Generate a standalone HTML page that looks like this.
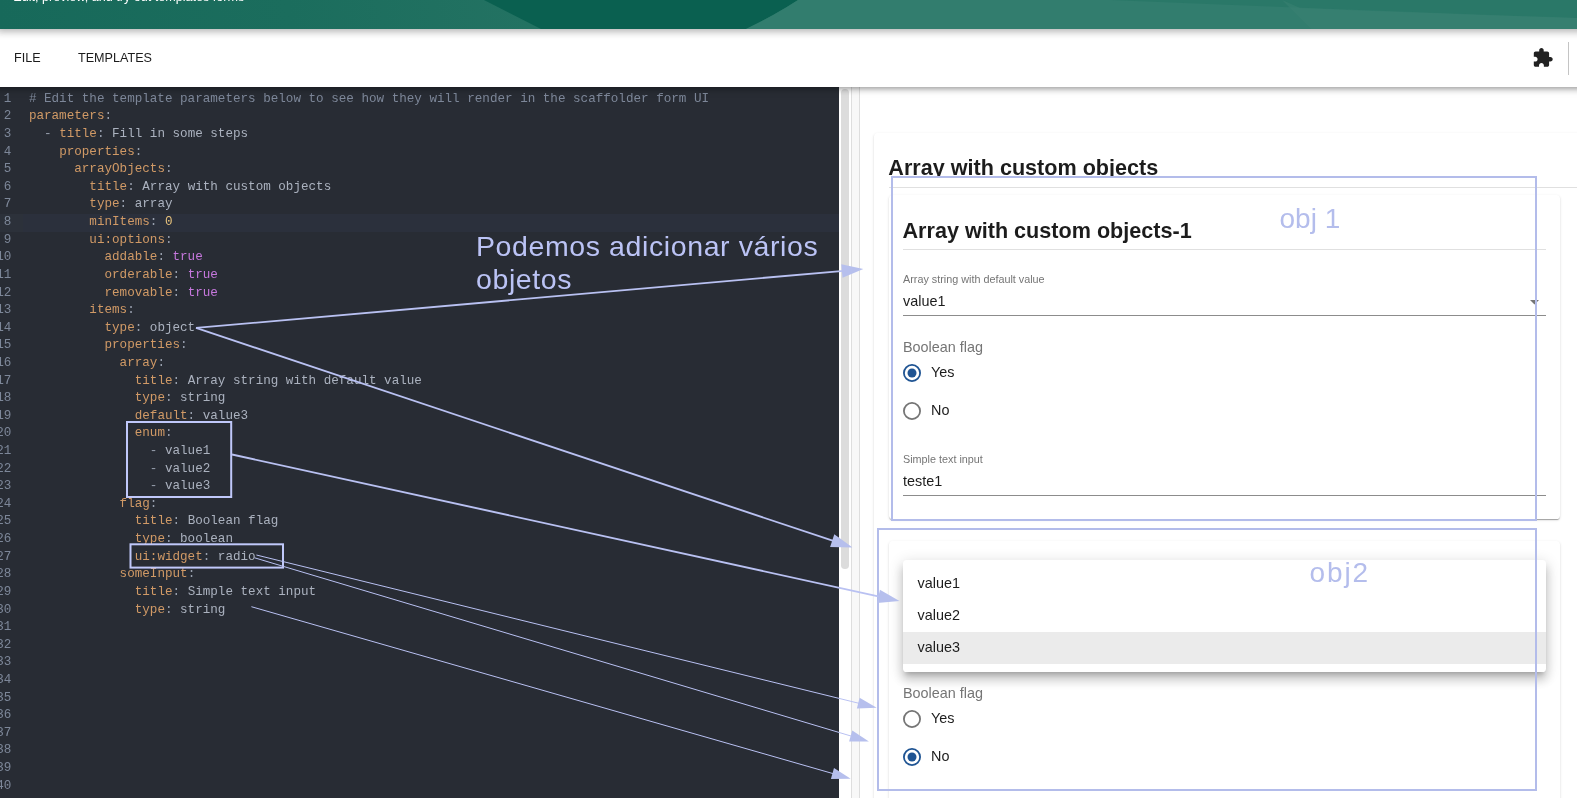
<!DOCTYPE html>
<html lang="pt-BR">
<head>
<meta charset="utf-8">
<title>Template Editor</title>
<style>
*{box-sizing:border-box;margin:0;padding:0}
html,body{width:1577px;height:798px;overflow:hidden;background:#fff;font-family:"Liberation Sans",Arial,sans-serif;color:rgba(0,0,0,.87)}
.abs{position:absolute}
#header{position:absolute;left:0;top:0;width:1617px;height:28.5px;background:#1b6d5e;box-shadow:0 0 7px 3px rgba(20,20,20,.3);z-index:5;overflow:hidden}
#header svg{position:absolute;left:0;top:0}
#hfg{position:absolute;left:0;top:0;width:1577px;height:28.5px;overflow:hidden;z-index:6;will-change:transform}
#hfg .sub{position:absolute;left:13.3px;top:-10.1px;font-size:12.6px;line-height:15px;color:#fff;white-space:nowrap}
#toolbar{position:absolute;left:-20px;top:28px;width:1637px;height:59px;background:#fff;z-index:4;box-shadow:0 2px 4px -1px rgba(0,0,0,.2),0 4px 5px 0 rgba(0,0,0,.14),0 1px 10px 0 rgba(0,0,0,.12)}
#tfg{position:absolute;left:0;top:28px;width:400px;height:59px;z-index:6;will-change:transform}
#tfg .btn{position:absolute;top:23px;font-size:12.6px;line-height:15px;color:#1c1c1c;text-transform:uppercase;white-space:nowrap}
#toolbar .vdiv{position:absolute;left:1588px;top:14px;width:1px;height:33px;background:#c4c4c4}
#toolbar svg{position:absolute;left:1551.6px;top:19px;width:21.6px;height:21.6px;fill:#212121}
#editorbg{position:absolute;left:0;top:87px;width:839px;height:711px;background:#282c34}
#editor{position:absolute;left:0;top:87px;width:839px;height:711px;overflow:hidden;will-change:transform;font-family:"Liberation Mono",monospace;font-size:12.6px;line-height:17.613px;color:#abb2bf;padding-top:3.83px}
.ln{position:relative;height:17.613px;white-space:pre}
.ln.act{background:#2b303c}
.ln.act::before{content:"";position:absolute;left:0;top:0;width:22.8px;height:100%;background:#2c313a}
.g{position:absolute;left:-12px;top:0;width:23.4px;text-align:right;color:#7d8799}
.t{position:absolute;left:28.9px;top:0}
.c{color:#7d8799}.k{color:#d19a66}.p{color:#98a0ae}.s{color:#abb2bf}.b{color:#c678dd}.n{color:#e5c07b}
#sb{position:absolute;left:839px;top:87px;width:12px;height:711px;background:#fff}
#sb i{position:absolute;left:2.3px;top:2px;width:7.6px;height:479.5px;border-radius:3.8px;background:#dcdcdc}
#split{position:absolute;left:851px;top:87px;width:9px;height:711px;background:#f8f8f8;border-left:1px solid #dedede;border-right:1px solid #dedede}
#preview{position:absolute;left:860px;top:87px;width:717px;height:711px;background:#fff;overflow:hidden}
#previewfg{position:absolute;left:860px;top:87px;width:717px;height:711px;overflow:hidden;will-change:transform}
.card{position:absolute;background:#fff;border-radius:3.6px;box-shadow:0 2px 1px -1px rgba(0,0,0,.2),0 1px 1px 0 rgba(0,0,0,.14),0 1px 3px 0 rgba(0,0,0,.12)}
.h5{position:absolute;font-size:21.6px;font-weight:700;line-height:26px;color:#1c1c1c;white-space:nowrap}
.hr{position:absolute;height:1px;background:#e0e0e0}
.lbl{position:absolute;font-size:10.8px;line-height:13px;color:#757575;white-space:nowrap}
.val{position:absolute;font-size:14.4px;line-height:17px;color:#1c1c1c;white-space:nowrap}
.leg{position:absolute;font-size:14.4px;line-height:17px;color:#757575;white-space:nowrap}
.ul{position:absolute;height:1px;background:#8c8c8c}
.radio{position:absolute;width:18px;height:18px;border-radius:50%;border:1.8px solid #757575}
.radio.on{border-color:#1f5493}
.radio.on::after{content:"";position:absolute;left:2.7px;top:2.7px;width:9px;height:9px;border-radius:50%;background:#1f5493}
#menu{position:absolute;left:43px;top:473.2px;width:643px;height:111.5px;background:#fff;border-radius:3.6px;box-shadow:0 5px 5px -3px rgba(0,0,0,.2),0 8px 10px 1px rgba(0,0,0,.14),0 3px 14px 2px rgba(0,0,0,.12)}
#menu .sel{position:absolute;left:0;top:71.6px;width:100%;height:32.2px;background:#ebebeb}
#anno{position:absolute;left:0;top:0;z-index:10;pointer-events:none}
#anno text{font-family:"Liberation Sans",Arial,sans-serif;fill:#b4bdec}
</style>
</head>
<body>
<div id="header">
<svg width="1577" height="29" viewBox="0 0 1577 29">
<defs><linearGradient id="hg" gradientUnits="userSpaceOnUse" x1="0" y1="29" x2="520" y2="-40"><stop offset="0" stop-color="#17695a"/><stop offset="0.55" stop-color="#1b6d5d"/><stop offset="1" stop-color="#237262"/></linearGradient></defs>
<rect width="1577" height="29" fill="url(#hg)"/>
<path d="M484 0 L541 29 L746 29 Q775 15 798 0 Z" fill="#0a6050"/>
<path d="M798 0 Q775 15 746 29 L1577 29 L1577 0 Z" fill="#327d6e"/>
<path d="M1110 0 Q1350 10 1577 18 L1577 0 Z" fill="#2a7868"/>
<path d="M1282 0 L1311 29 L1577 29 L1577 18 Q1420 13 1300 8 Z" fill="#388071" opacity=".6"/>
</svg>
</div>
<div id="hfg"><div class="sub">Edit, preview, and try out templates forms</div></div>
<div id="toolbar">
<svg viewBox="0 0 24 24"><path d="M20.5 11H19V7c0-1.1-.9-2-2-2h-4V3.5C13 2.12 11.88 1 10.5 1S8 2.12 8 3.5V5H4c-1.1 0-1.99.9-1.99 2v3.8H3.5c1.49 0 2.7 1.21 2.7 2.7s-1.21 2.7-2.7 2.7H2V20c0 1.1.9 2 2 2h3.8v-1.5c0-1.49 1.21-2.7 2.7-2.7 1.49 0 2.7 1.21 2.7 2.7V22H17c1.1 0 2-.9 2-2v-4h1.5c1.38 0 2.5-1.12 2.5-2.5S21.88 11 20.5 11z"/></svg>
<div class="vdiv"></div>
</div>
<div id="tfg"><div class="btn" style="left:14px">FILE</div><div class="btn" style="left:78px">TEMPLATES</div></div>
<div id="editorbg"></div>
<div id="editor">
<div class="ln"><span class="g">1</span><span class="t"><span class="c"># Edit the template parameters below to see how they will render in the scaffolder form UI</span></span></div>
<div class="ln"><span class="g">2</span><span class="t"><span class="k">parameters</span><span class="p">:</span></span></div>
<div class="ln"><span class="g">3</span><span class="t">  <span class="p">-</span> <span class="k">title</span><span class="p">:</span> <span class="s">Fill in some steps</span></span></div>
<div class="ln"><span class="g">4</span><span class="t">    <span class="k">properties</span><span class="p">:</span></span></div>
<div class="ln"><span class="g">5</span><span class="t">      <span class="k">arrayObjects</span><span class="p">:</span></span></div>
<div class="ln"><span class="g">6</span><span class="t">        <span class="k">title</span><span class="p">:</span> <span class="s">Array with custom objects</span></span></div>
<div class="ln"><span class="g">7</span><span class="t">        <span class="k">type</span><span class="p">:</span> <span class="s">array</span></span></div>
<div class="ln act"><span class="g">8</span><span class="t">        <span class="k">minItems</span><span class="p">:</span> <span class="n">0</span></span></div>
<div class="ln"><span class="g">9</span><span class="t">        <span class="k">ui:options</span><span class="p">:</span></span></div>
<div class="ln"><span class="g">10</span><span class="t">          <span class="k">addable</span><span class="p">:</span> <span class="b">true</span></span></div>
<div class="ln"><span class="g">11</span><span class="t">          <span class="k">orderable</span><span class="p">:</span> <span class="b">true</span></span></div>
<div class="ln"><span class="g">12</span><span class="t">          <span class="k">removable</span><span class="p">:</span> <span class="b">true</span></span></div>
<div class="ln"><span class="g">13</span><span class="t">        <span class="k">items</span><span class="p">:</span></span></div>
<div class="ln"><span class="g">14</span><span class="t">          <span class="k">type</span><span class="p">:</span> <span class="s">object</span></span></div>
<div class="ln"><span class="g">15</span><span class="t">          <span class="k">properties</span><span class="p">:</span></span></div>
<div class="ln"><span class="g">16</span><span class="t">            <span class="k">array</span><span class="p">:</span></span></div>
<div class="ln"><span class="g">17</span><span class="t">              <span class="k">title</span><span class="p">:</span> <span class="s">Array string with default value</span></span></div>
<div class="ln"><span class="g">18</span><span class="t">              <span class="k">type</span><span class="p">:</span> <span class="s">string</span></span></div>
<div class="ln"><span class="g">19</span><span class="t">              <span class="k">default</span><span class="p">:</span> <span class="s">value3</span></span></div>
<div class="ln"><span class="g">20</span><span class="t">              <span class="k">enum</span><span class="p">:</span></span></div>
<div class="ln"><span class="g">21</span><span class="t">                <span class="p">-</span> <span class="s">value1</span></span></div>
<div class="ln"><span class="g">22</span><span class="t">                <span class="p">-</span> <span class="s">value2</span></span></div>
<div class="ln"><span class="g">23</span><span class="t">                <span class="p">-</span> <span class="s">value3</span></span></div>
<div class="ln"><span class="g">24</span><span class="t">            <span class="k">flag</span><span class="p">:</span></span></div>
<div class="ln"><span class="g">25</span><span class="t">              <span class="k">title</span><span class="p">:</span> <span class="s">Boolean flag</span></span></div>
<div class="ln"><span class="g">26</span><span class="t">              <span class="k">type</span><span class="p">:</span> <span class="s">boolean</span></span></div>
<div class="ln"><span class="g">27</span><span class="t">              <span class="k">ui:widget</span><span class="p">:</span> <span class="s">radio</span></span></div>
<div class="ln"><span class="g">28</span><span class="t">            <span class="k">someInput</span><span class="p">:</span></span></div>
<div class="ln"><span class="g">29</span><span class="t">              <span class="k">title</span><span class="p">:</span> <span class="s">Simple text input</span></span></div>
<div class="ln"><span class="g">30</span><span class="t">              <span class="k">type</span><span class="p">:</span> <span class="s">string</span></span></div>
<div class="ln"><span class="g">31</span><span class="t"></span></div>
<div class="ln"><span class="g">32</span><span class="t"></span></div>
<div class="ln"><span class="g">33</span><span class="t"></span></div>
<div class="ln"><span class="g">34</span><span class="t"></span></div>
<div class="ln"><span class="g">35</span><span class="t"></span></div>
<div class="ln"><span class="g">36</span><span class="t"></span></div>
<div class="ln"><span class="g">37</span><span class="t"></span></div>
<div class="ln"><span class="g">38</span><span class="t"></span></div>
<div class="ln"><span class="g">39</span><span class="t"></span></div>
<div class="ln"><span class="g">40</span><span class="t"></span></div>
</div>
<div id="sb"><i></i></div>
<div id="split"></div>
<div id="preview">
  <div class="card" style="left:13.5px;top:45.5px;width:760px;height:800px"></div>
  <div class="hr" style="left:29px;top:100px;width:700px"></div>
  <div class="card" style="left:28.5px;top:107.7px;width:671.5px;height:324.8px"></div>
  <div class="hr" style="left:43px;top:162px;width:643px"></div>
  <svg class="abs" style="left:669.8px;top:213px" width="9" height="5" viewBox="0 0 9 5"><path d="M0 0h9L4.5 4.5z" fill="#757575"/></svg>
  <div class="ul" style="left:43px;top:228px;width:643px"></div>
  <svg class="abs" style="left:40.8px;top:274.7px" width="22" height="22" viewBox="0 0 22 22"><circle cx="11" cy="11" r="8.1" fill="none" stroke="#1f5493" stroke-width="1.8"/><circle cx="11" cy="11" r="4.5" fill="#1f5493"/></svg>
  <svg class="abs" style="left:40.8px;top:312.8px" width="22" height="22" viewBox="0 0 22 22"><circle cx="11" cy="11" r="8.1" fill="none" stroke="#757575" stroke-width="1.8"/></svg>
  <div class="ul" style="left:43px;top:408px;width:643px"></div>
  <div class="card" style="left:28.5px;top:454.4px;width:671.5px;height:400px"></div>
  <div id="menu"><div class="sel"></div></div>
  <svg class="abs" style="left:40.8px;top:620.7px" width="22" height="22" viewBox="0 0 22 22"><circle cx="11" cy="11" r="8.1" fill="none" stroke="#757575" stroke-width="1.8"/></svg>
  <svg class="abs" style="left:40.8px;top:658.7px" width="22" height="22" viewBox="0 0 22 22"><circle cx="11" cy="11" r="8.1" fill="none" stroke="#1f5493" stroke-width="1.8"/><circle cx="11" cy="11" r="4.5" fill="#1f5493"/></svg>
</div>
<div id="previewfg">
  <div class="h5" style="left:28.3px;top:68px;height:22.8px;overflow:hidden">Array with custom objects</div>
  <div class="h5" style="left:42.5px;top:131.2px">Array with custom objects-1</div>
  <div class="lbl" style="left:43px;top:185.5px">Array string with default value</div>
  <div class="val" style="left:43px;top:205.5px">value1</div>
  <div class="leg" style="left:43px;top:251.5px">Boolean flag</div>
  <div class="val" style="left:71px;top:277.2px">Yes</div>
  <div class="val" style="left:71px;top:315.3px">No</div>
  <div class="lbl" style="left:43px;top:366.2px">Simple text input</div>
  <div class="val" style="left:43px;top:386.3px">teste1</div>
  <div class="val" style="left:57.6px;top:488px">value1</div>
  <div class="val" style="left:57.6px;top:520.1px">value2</div>
  <div class="val" style="left:57.6px;top:552.3px">value3</div>
  <div class="leg" style="left:43px;top:597.6px">Boolean flag</div>
  <div class="val" style="left:71px;top:623.2px">Yes</div>
  <div class="val" style="left:71px;top:661.2px">No</div>
</div>

<svg id="anno" width="1577" height="798" viewBox="0 0 1577 798">
<g fill="none" stroke="#b3bcea" stroke-width="2">
<rect x="892" y="177" width="644" height="343"/>
<rect x="878" y="529" width="658" height="261"/>
</g>
<g fill="none" stroke="#c0c8fa" stroke-width="2">
<rect x="127" y="422" width="104.2" height="75"/>
<rect x="130.5" y="544.3" width="152.5" height="23.3"/>
</g>
<line x1="196.0" y1="327.9" x2="843.9" y2="270.8" stroke="#b9c1f2" stroke-width="1.8"/><polygon points="842.5,277.7 863.3,269.1 841.3,264.3" fill="#b6bfed"/>
<line x1="196.0" y1="327.9" x2="834.1" y2="541.2" stroke="#b9c1f2" stroke-width="1.8"/><polygon points="830.1,546.9 852.6,547.4 834.3,534.2" fill="#b6bfed"/>
<line x1="232.0" y1="454.5" x2="880.5" y2="596.8" stroke="#b9c1f2" stroke-width="1.8"/><polygon points="877.1,602.9 899.5,601.0 879.9,589.8" fill="#b6bfed"/>
<line x1="256.4" y1="555.0" x2="860.2" y2="703.6" stroke="#b9c1f2" stroke-width="1"/><polygon points="856.9,708.6 876.7,707.7 859.6,697.7" fill="#b6bfed"/>
<line x1="254.6" y1="557.8" x2="852.6" y2="736.5" stroke="#b9c1f2" stroke-width="1"/><polygon points="849.1,741.4 868.9,741.4 852.3,730.5" fill="#b6bfed"/>
<line x1="251.4" y1="606.7" x2="834.4" y2="774.0" stroke="#b9c1f2" stroke-width="1"/><polygon points="830.9,778.9 850.7,778.7 834.0,768.0" fill="#b6bfed"/>
<text x="476" y="255.7" font-size="28.5" letter-spacing="0.6" style="fill:#bbc3f5">Podemos adicionar vários</text>
<text x="476" y="289.4" font-size="28.5" letter-spacing="0.6" style="fill:#bbc3f5">objetos</text>
<text x="1279.5" y="228" font-size="28">obj 1</text>
<text x="1309.5" y="582" font-size="28" letter-spacing="1.9">obj2</text>
</svg>
</body>
</html>
